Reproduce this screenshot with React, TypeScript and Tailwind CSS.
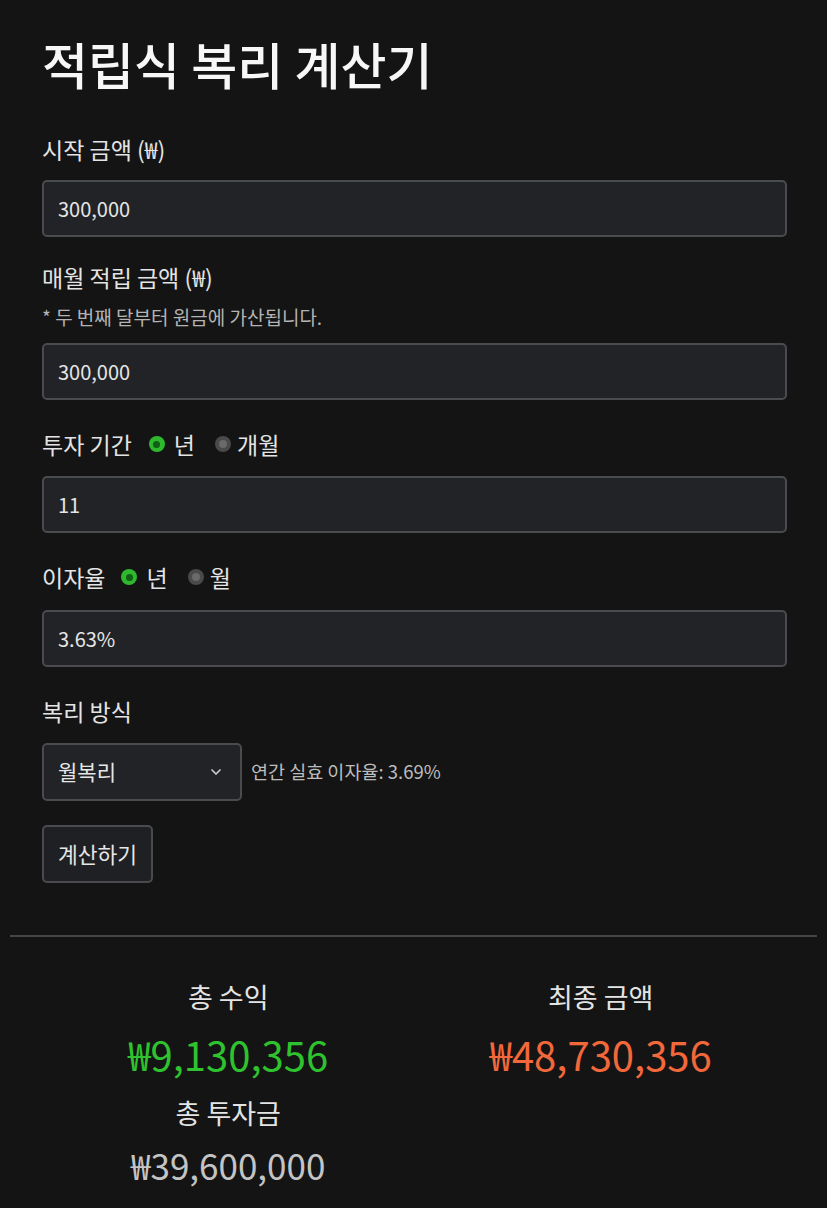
import React from "react";
import { ChevronDown } from "lucide-react";

const font = { fontFamily: "'Noto Sans CJK KR', 'Noto Sans', sans-serif" };

function Radio({ checked }: { checked: boolean }) {
  return checked ? (
    <span className="inline-flex h-[16px] w-[16px] items-center justify-center rounded-full bg-[#2fb82f]">
      <span className="h-[7px] w-[7px] rounded-full bg-[#0f5f14]" />
    </span>
  ) : (
    <span className="inline-flex h-[16px] w-[16px] items-center justify-center rounded-full bg-[#4a4a4a]">
      <span className="h-[8px] w-[8px] rounded-full bg-[#6a6a6a]" />
    </span>
  );
}

function Input({ value, className = "" }: { value: string; className?: string }) {
  return (
    <div
      className={`flex h-[57px] items-center rounded-[5px] border-2 border-[#4a4b4f] bg-[#222327] pl-[14px] text-[20px] text-[#e6e6e6] ${className}`}
    >
      {value}
    </div>
  );
}

export default function App() {
  return (
    <div className="min-h-[1208px] w-full bg-[#141414] px-[10px]" style={font}>
      <div className="pl-[32px] pr-[30px] pt-[32px]">
        <h1 className="h-[62px] text-[50px] font-medium leading-[62px] text-[#f7f7f7]">
          적립식 복리 계산기
        </h1>

        <div className="mt-[40px] h-[30px] text-[23px] leading-[30px] text-[#e4e4e4]">
          시작 금액 (₩)
        </div>
        <Input value="300,000" className="mt-[16px]" />

        <div className="mt-[25px] h-[30px] text-[23px] leading-[30px] text-[#e4e4e4]">
          매월 적립 금액 (₩)
        </div>
        <div className="mt-[13px] h-[24px] text-[19px] leading-[24px] text-[#b3b3b3]">
          * 두 번째 달부터 원금에 가산됩니다.
        </div>
        <Input value="300,000" className="mt-[14px]" />

        <div className="mt-[29px] flex h-[30px] items-center text-[23px] leading-[30px] text-[#e4e4e4]">
          <span>투자 기간</span>
          <span className="ml-[17px] flex items-center gap-[9px]">
            <Radio checked />
            <span>년</span>
          </span>
          <span className="ml-[20px] flex items-center gap-[6px]">
            <Radio checked={false} />
            <span>개월</span>
          </span>
        </div>
        <Input value="11" className="mt-[17px]" />

        <div className="mt-[29px] flex h-[30px] items-center text-[23px] leading-[30px] text-[#e4e4e4]">
          <span>이자율</span>
          <span className="ml-[16px] flex items-center gap-[9px]">
            <Radio checked />
            <span>년</span>
          </span>
          <span className="ml-[20px] flex items-center gap-[6px]">
            <Radio checked={false} />
            <span>월</span>
          </span>
        </div>
        <Input value="3.63%" className="mt-[18px]" />

        <div className="mt-[29px] h-[30px] text-[23px] leading-[30px] text-[#e4e4e4]">
          복리 방식
        </div>
        <div className="mt-[17px] flex items-center">
          <div className="flex h-[58px] w-[200px] items-center justify-between rounded-[5px] border-2 border-[#4a4b4f] bg-[#222327] pl-[14px] pr-[16px] text-[21px] text-[#e6e6e6]">
            <span>월복리</span>
            <ChevronDown size={16} strokeWidth={2.5} className="text-[#cfcfcf]" />
          </div>
          <span className="ml-[9px] text-[18.5px] text-[#bdbdbd]">연간 실효 이자율: 3.69%</span>
        </div>

        <button className="mt-[24px] flex h-[58px] w-[111px] items-center justify-center rounded-[5px] border-2 border-[#4a4b4f] bg-[#1f2023] text-[21.5px] text-[#e6e6e6]">
          계산하기
        </button>
      </div>

      <div className="mt-[52px] h-[2px] w-full bg-[#464646]" />

      <div className="grid grid-cols-2 pl-[32px] pr-[30px] pt-[42px]">
        <div className="flex flex-col items-center">
          <div className="h-[36px] text-[27px] leading-[36px] text-[#e4e4e4]">총 수익</div>
          <div className="mt-[11px] h-[56px] text-[40px] leading-[56px] text-[#2fc22f]">₩9,130,356</div>
          <div className="mt-[13px] h-[36px] text-[27px] leading-[36px] text-[#e4e4e4]">총 투자금</div>
          <div className="mt-[9px] h-[50px] text-[35px] leading-[50px] text-[#c4c4c4]">₩39,600,000</div>
        </div>
        <div className="flex flex-col items-center">
          <div className="h-[36px] text-[27px] leading-[36px] text-[#e4e4e4]">최종 금액</div>
          <div className="mt-[11px] h-[56px] text-[40px] leading-[56px] text-[#f2683a]">₩48,730,356</div>
        </div>
      </div>
    </div>
  );
}
